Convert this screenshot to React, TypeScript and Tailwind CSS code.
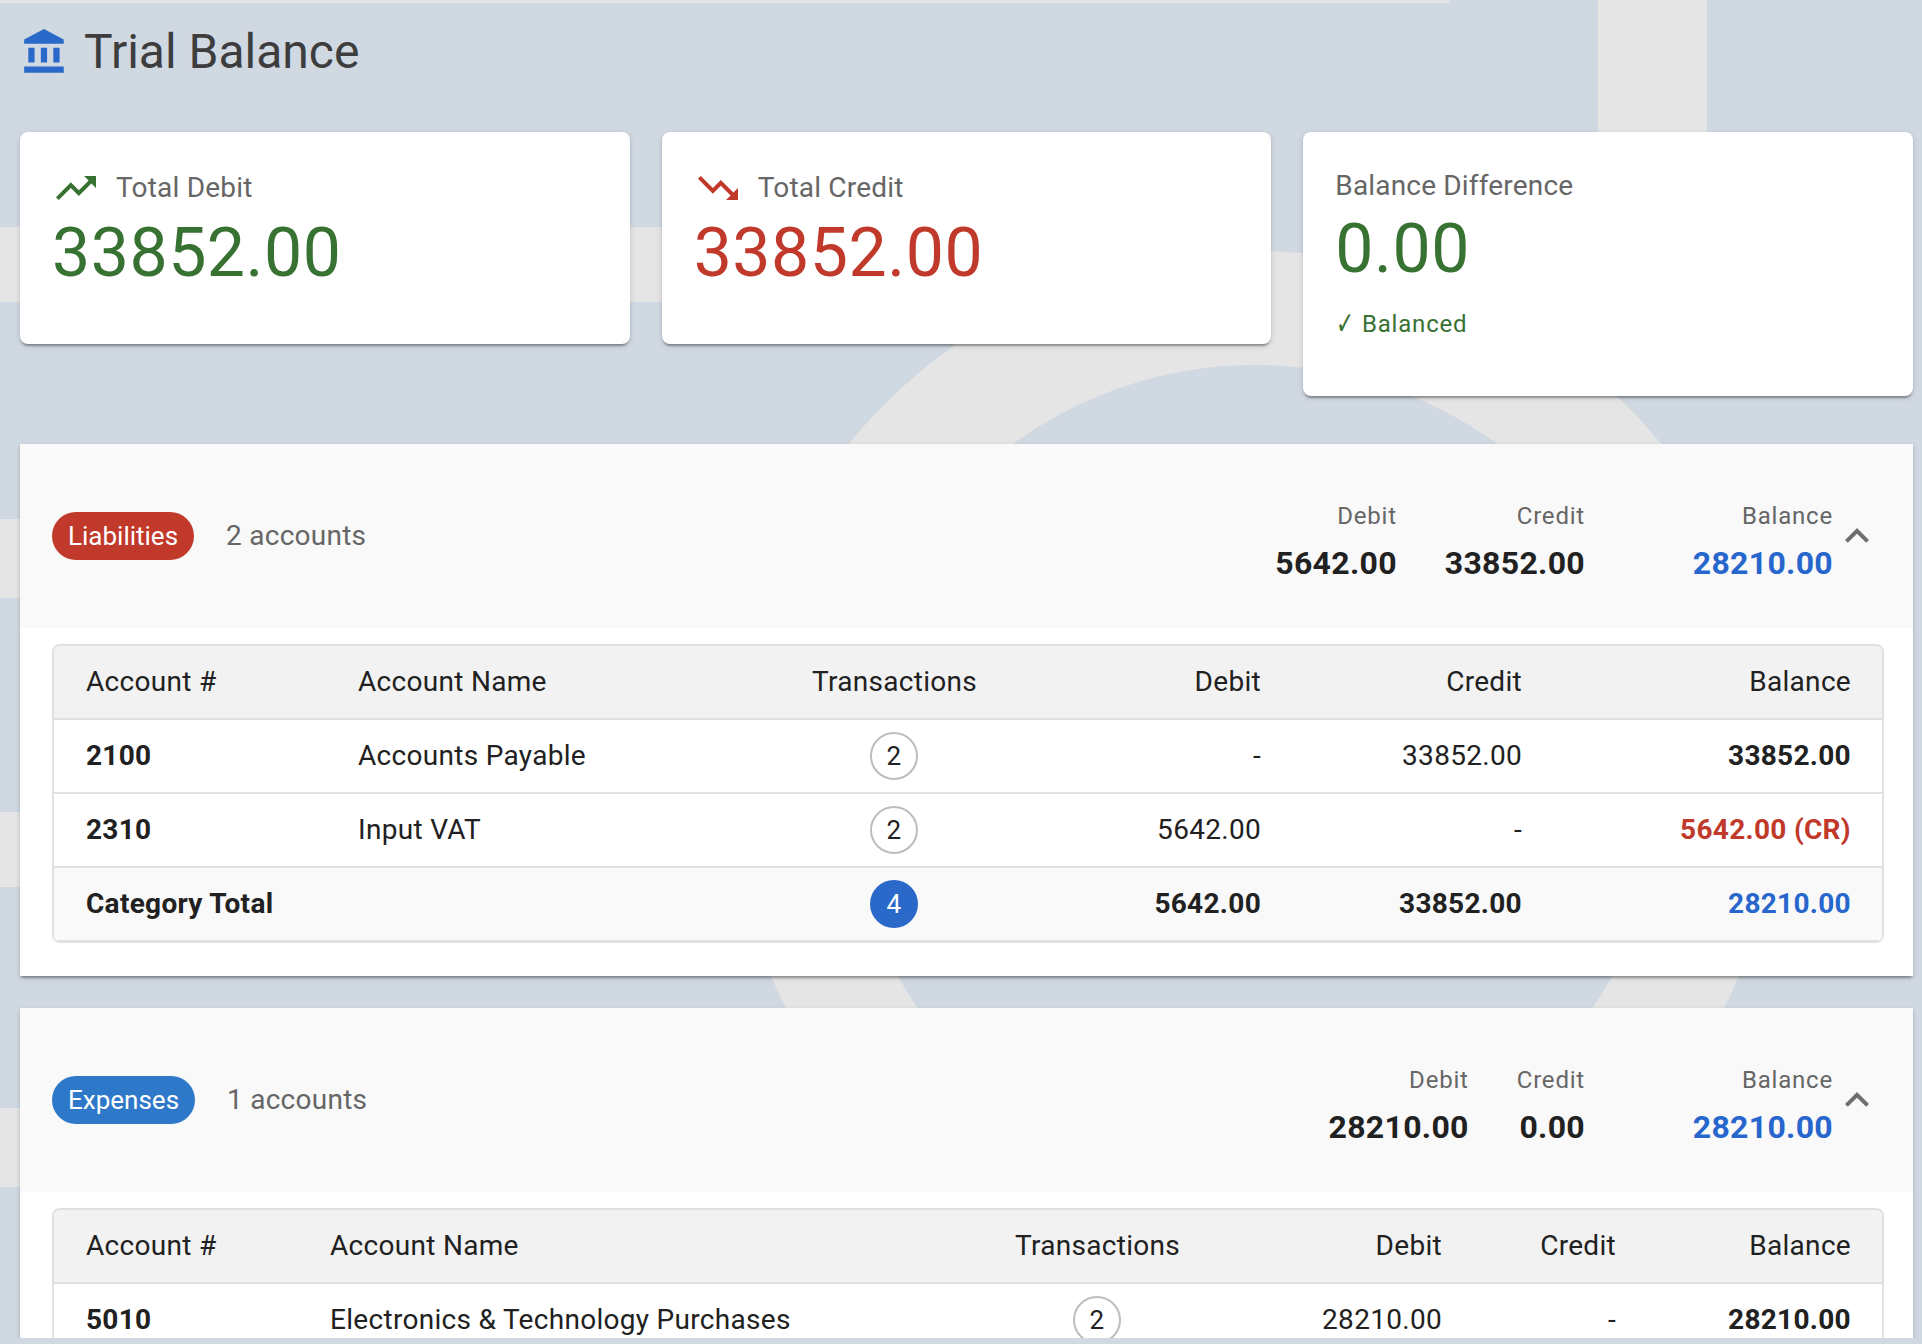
type Row = {
  number: string;
  name: string;
  tx: number;
  debit: string;
  credit: string;
  balance: string;
  balanceClass: string;
};

type Category = {
  label: string;
  chipClass: string;
  accounts: string;
  debit: string;
  credit: string;
  balance: string;
  cols: string[];
  rows: Row[];
  total?: { tx: number; debit: string; credit: string; balance: string };
};

const categories: Category[] = [
  {
    label: "Liabilities",
    chipClass: "bg-[#c0392b]",
    accounts: "2 accounts",
    debit: "5642.00",
    credit: "33852.00",
    balance: "28210.00",
    cols: ["w-[272px]", "w-[454px]", "w-[228px]", "w-[284px]", "w-[261px]", "w-[329px]"],
    rows: [
      { number: "2100", name: "Accounts Payable", tx: 2, debit: "-", credit: "33852.00", balance: "33852.00", balanceClass: "text-[#212121]" },
      { number: "2310", name: "Input VAT", tx: 2, debit: "5642.00", credit: "-", balance: "5642.00 (CR)", balanceClass: "text-[#c0392b]" },
    ],
    total: { tx: 4, debit: "5642.00", credit: "33852.00", balance: "28210.00" },
  },
  {
    label: "Expenses",
    chipClass: "bg-[#2e78c9]",
    accounts: "1 accounts",
    debit: "28210.00",
    credit: "0.00",
    balance: "28210.00",
    cols: ["w-[244px]", "w-[685px]", "w-[228px]", "w-[262px]", "w-[174px]", "w-[235px]"],
    rows: [
      { number: "5010", name: "Electronics & Technology Purchases", tx: 2, debit: "28210.00", credit: "-", balance: "28210.00", balanceClass: "text-[#212121]" },
    ],
  },
];

const elevation =
  "shadow-[0_4px_2px_-2px_rgba(0,0,0,0.2),0_2px_2px_0_rgba(0,0,0,0.14),0_2px_6px_0_rgba(0,0,0,0.12)]";

function Wallpaper() {
  return (
    <svg className="absolute inset-0" width="1922" height="1344" viewBox="0 0 1922 1344" fill="#e5e5e5">
      <rect x="0" y="0" width="1450" height="3" />
      <rect x="1598" y="0" width="109" height="140" />
      <rect x="0" y="227" width="1000" height="75" />
      <rect x="0" y="519" width="30" height="79" />
      <rect x="0" y="812" width="30" height="75" />
      <rect x="0" y="1108" width="30" height="79" />
      <circle cx="1255" cy="775" r="467" fill="none" stroke="#e5e5e5" strokeWidth="114" />
    </svg>
  );
}

function IconCard(props: { label: string; value: string; valueClass: string; icon: React.ReactNode }) {
  return (
    <div className={`bg-white rounded-lg pt-8 px-8 pb-[50px] ${elevation}`}>
      <div className="flex items-center gap-4 h-12">
        {props.icon}
        <span className="text-[28px] leading-[42px] text-[#666666] tracking-[0.2px]">{props.label}</span>
      </div>
      <div className={`text-[68px] leading-[82px] tracking-[0.5px] ${props.valueClass}`}>{props.value}</div>
    </div>
  );
}

function Stat(props: { label: string; value: string; valueClass: string; wrapClass?: string }) {
  return (
    <div className={`text-right ${props.wrapClass ?? ""}`}>
      <div className="text-[24px] leading-[40px] tracking-[0.8px] text-[#666666]">{props.label}</div>
      <div className={`text-[32px] leading-[54px] font-bold tracking-[0.3px] ${props.valueClass}`}>{props.value}</div>
    </div>
  );
}

function Count({ n, filled }: { n: number; filled?: boolean }) {
  return (
    <span
      className={
        filled
          ? "inline-flex items-center justify-center w-12 h-12 rounded-full bg-[#2a68c9] text-white text-[26px]"
          : "inline-flex items-center justify-center w-12 h-12 rounded-full border-2 border-[#bdbdbd] text-[#212121] text-[26px]"
      }
    >
      {n}
    </span>
  );
}

function CategoryCard({ cat }: { cat: Category }) {
  const cell = "pl-8 pr-[31px] h-[74px] border-b-2 border-[#e0e0e0]";
  const midCell = "px-8 h-[74px] border-b-2 border-[#e0e0e0] text-center";
  return (
    <section className={`bg-white ${elevation}`}>
      <div className="h-[184px] bg-[#f9f9f9] flex items-center justify-between pl-8 pr-8">
        <div className="flex items-center gap-8">
          <span className={`h-12 px-4 rounded-full flex items-center text-white text-[26px] ${cat.chipClass}`}>
            {cat.label}
          </span>
          <span className="text-[28px] tracking-[0.25px] text-[#666666]">{cat.accounts}</span>
        </div>
        <div className="flex items-center">
          <div className="flex gap-12 pt-[14px]">
            <Stat label="Debit" value={cat.debit} valueClass="text-[#212121]" />
            <Stat label="Credit" value={cat.credit} valueClass="text-[#212121]" />
            <Stat label="Balance" value={cat.balance} valueClass="text-[#2766cc]" wrapClass="min-w-[200px]" />
          </div>
          <svg className="w-12 h-12 fill-[#6e6e6e]" viewBox="0 0 24 24">
            <path d="m12 8-6 6 1.41 1.41L12 10.83l4.59 4.58L18 14z" />
          </svg>
        </div>
      </div>
      <div className="pt-4 pb-[33px] pl-8 pr-[29px]">
        <div className="border-2 border-b border-[#e0e0e0] rounded-lg overflow-hidden bg-white">
          <table className="w-full table-fixed border-separate border-spacing-0 text-[28px] tracking-[0.3px] text-[#212121]">
            <colgroup>
              {cat.cols.map((c) => (
                <col key={c} className={c} />
              ))}
            </colgroup>
            <thead>
              <tr className="bg-[#f2f2f2]">
                <th className={`${cell} text-left font-normal`}>Account #</th>
                <th className={`${cell} text-left font-normal`}>Account Name</th>
                <th className={`${midCell} font-normal`}>Transactions</th>
                <th className={`${cell} text-right font-normal`}>Debit</th>
                <th className={`${cell} text-right font-normal`}>Credit</th>
                <th className={`${cell} text-right font-normal`}>Balance</th>
              </tr>
            </thead>
            <tbody>
              {cat.rows.map((r) => (
                <tr key={r.number}>
                  <td className={`${cell} font-bold`}>{r.number}</td>
                  <td className={cell}>{r.name}</td>
                  <td className={midCell}>
                    <Count n={r.tx} />
                  </td>
                  <td className={`${cell} text-right`}>{r.debit}</td>
                  <td className={`${cell} text-right`}>{r.credit}</td>
                  <td className={`${cell} text-right font-bold ${r.balanceClass}`}>{r.balance}</td>
                </tr>
              ))}
              {cat.total && (
                <tr className="bg-[#f9f9f9] font-bold">
                  <td className={cell}>Category Total</td>
                  <td className={cell}></td>
                  <td className={`${midCell} font-normal`}>
                    <Count n={cat.total.tx} filled />
                  </td>
                  <td className={`${cell} text-right`}>{cat.total.debit}</td>
                  <td className={`${cell} text-right`}>{cat.total.credit}</td>
                  <td className={`${cell} text-right text-[#2766cc]`}>{cat.total.balance}</td>
                </tr>
              )}
            </tbody>
          </table>
        </div>
      </div>
    </section>
  );
}

export default function App() {
  return (
    <div className="relative h-[1344px] overflow-hidden bg-[#d0d8e2] font-['Roboto',sans-serif]">
      <Wallpaper />
      <div className="relative h-[1338px] overflow-hidden pt-5 pl-5 pr-[9px]">
        <div className="flex items-center gap-[14px] h-16 mb-12">
          <svg className="w-[50px] h-[50px] fill-[#2a68c9]" viewBox="0 0 24 24">
            <path d="M4 10v7h3v-7zm6 0v7h3v-7zM2 22h19v-3H2zm14-12v7h3v-7zm-4.5-9L2 6v2h19V6z" />
          </svg>
          <h1 className="text-[48px] leading-[64px] text-[#3d3d3d]">Trial Balance</h1>
        </div>

        <div className="grid grid-cols-3 gap-8 items-start mb-12">
          <IconCard
            label="Total Debit"
            value="33852.00"
            valueClass="text-[#387232]"
            icon={
              <svg className="w-12 h-12 fill-[#387232]" viewBox="0 0 24 24">
                <path d="M16 6l2.29 2.29-4.88 4.88-4-4L2 16.59 3.41 18l6-6 4 4 6.3-6.29L22 12V6z" />
              </svg>
            }
          />
          <IconCard
            label="Total Credit"
            value="33852.00"
            valueClass="text-[#c0392b]"
            icon={
              <svg className="w-12 h-12 fill-[#c0392b]" viewBox="0 0 24 24">
                <path d="M16 18l2.29-2.29-4.88-4.88-4 4L2 7.41 3.41 6l6 6 4-4 6.3 6.29L22 12v6z" />
              </svg>
            }
          />
          <div className={`bg-white rounded-lg pt-8 px-8 pb-[47px] ${elevation}`}>
            <div className="text-[28px] leading-[44px] text-[#666666] tracking-[0.17px]">Balance Difference</div>
            <div className="text-[68px] leading-[82px] tracking-[0.5px] text-[#387232]">0.00</div>
            <div className="mt-[9px] text-[24px] leading-[50px] tracking-[0.8px] text-[#387232]">
              <span className="inline-block -mr-px scale-x-[0.9] scale-y-[1.3] font-['DejaVu_Sans',sans-serif]">✓</span> Balanced
            </div>
          </div>
        </div>

        <div className="flex flex-col gap-8">
          {categories.map((c) => (
            <CategoryCard key={c.label} cat={c} />
          ))}
        </div>
      </div>
    </div>
  );
}
